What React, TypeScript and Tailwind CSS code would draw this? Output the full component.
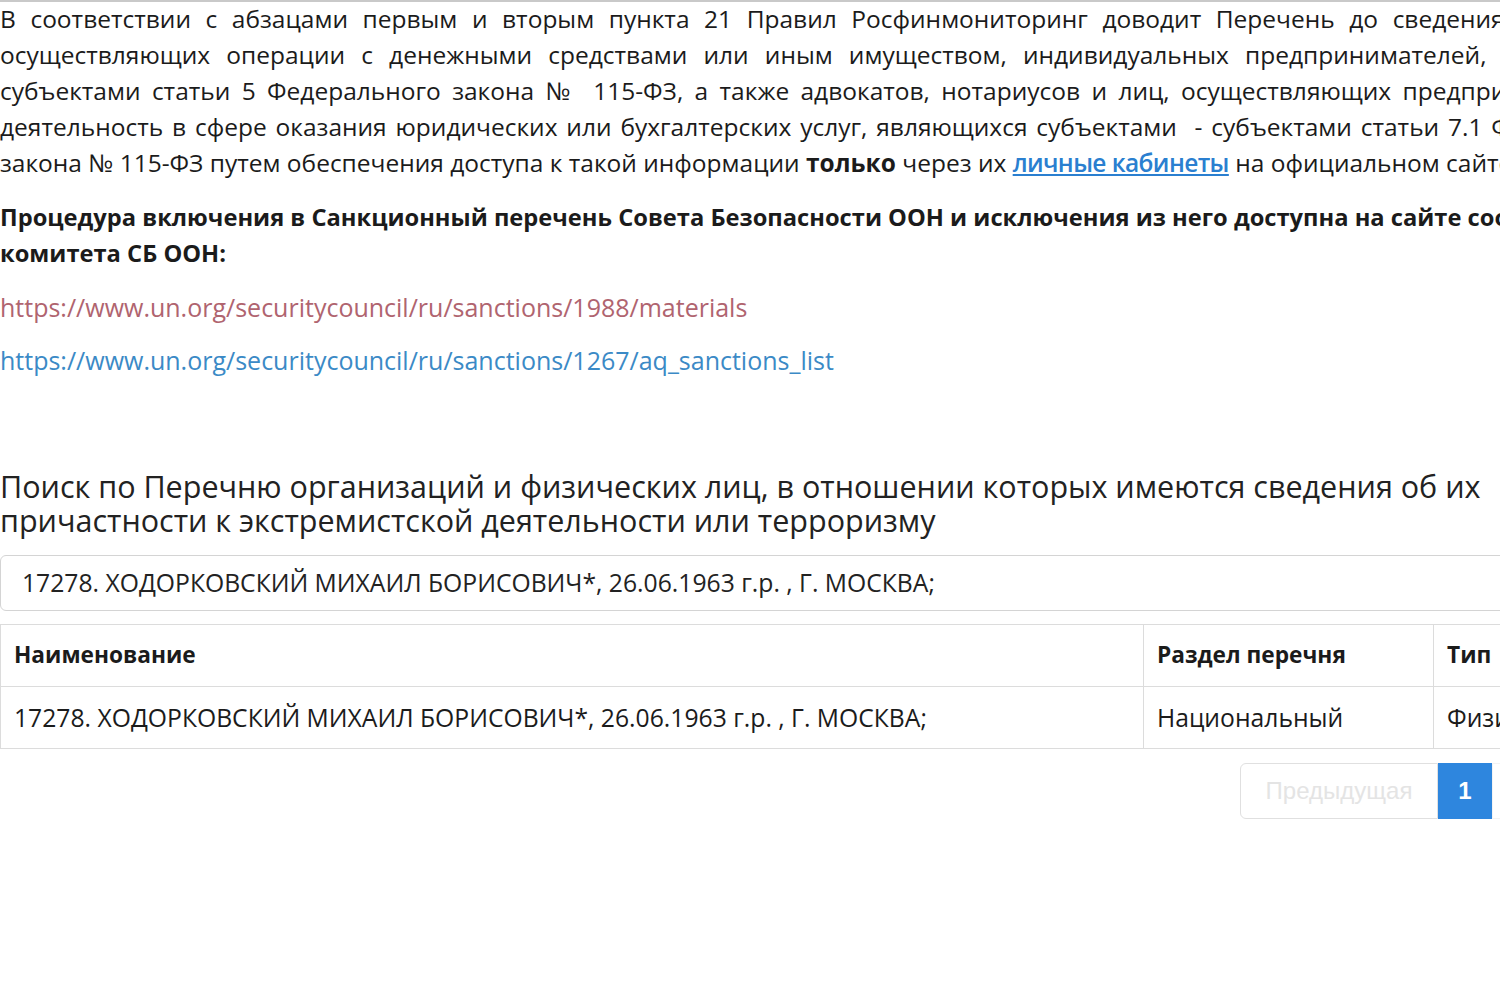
import React from 'react';

// each line of the intro keeps its own word spacing, as the justified original does
const lines = [
    'В соответствии с абзацами первым и вторым пункта 21 Правил Росфинмониторинг доводит Перечень до сведения организаций,',
    'осуществляющих операции с денежными средствами или иным имуществом, индивидуальных предпринимателей, являющихся',
    'субъектами статьи 5 Федерального закона №  115-ФЗ, а также адвокатов, нотариусов и лиц, осуществляющих предпринимательскую',
    'деятельность в сфере оказания юридических или бухгалтерских услуг, являющихся субъектами  - субъектами статьи 7.1 Федерального',
];

const fio = '17278. ХОДОРКОВСКИЙ МИХАИЛ БОРИСОВИЧ*, 26.06.1963 г.р. , Г. МОСКВА;';

export default function App() {
    return (
        <div className="w-[1500px] h-[1000px] overflow-hidden bg-white text-[#1b1b1b] font-['Open_Sans',sans-serif] border-t-2 border-[#c9c9c9]">
            <div className="w-[1620px]">
                {/* Intro paragraph */}
                <div className="text-[24.5px] leading-[36px] -mt-[1px]">
                    <div className="whitespace-pre [word-spacing:8.2px]">{lines[0]}</div>
                    <div className="whitespace-pre [word-spacing:9.8px]">{lines[1]}</div>
                    <div className="whitespace-pre [word-spacing:5px]">{lines[2]}</div>
                    <div className="whitespace-pre [word-spacing:2.5px]">{lines[3]}</div>
                    <div className="whitespace-nowrap">
                        закона № 115-ФЗ путем обеспечения доступа к такой информации{' '}
                        <b>только</b> через их{' '}
                        <a className="font-semibold tracking-[-0.6px] text-[#2a7fd0] underline">личные кабинеты</a>{' '}
                        на официальном сайте Росфинмониторинга.
                    </div>
                </div>

                <p className="mt-[18px] text-[23.7px] leading-[36px] font-bold whitespace-nowrap">
                    Процедура включения в Санкционный перечень Совета Безопасности ООН и исключения из него доступна на сайте соответствующего
                    <br />
                    комитета СБ ООН:
                </p>

                <p className="mt-[18px] text-[25px] leading-[36px] text-[#b0646f]">
                    https://www.un.org/securitycouncil/ru/sanctions/1988/materials
                </p>
                <p className="mt-[17px] text-[25px] leading-[36px] text-[#3b8ac6]">
                    https://www.un.org/securitycouncil/ru/sanctions/1267/aq_sanctions_list
                </p>

                <h2 className="mt-[91px] w-[1500px] text-[30.5px] leading-[34px] text-[#222]">
                    Поиск по Перечню организаций и физических лиц, в отношении которых имеются сведения об их причастности к экстремистской деятельности или терроризму
                </h2>

                <div className="mt-[18px] h-[56px] flex items-center px-[21px] border border-[#d4d4d4] rounded-md text-[24.7px] text-[#222]">
                    {fio}
                </div>

                <table className="mt-[13px] w-[1733px] table-fixed border-collapse text-[24.7px] text-[#1b1b1b]">
                    <colgroup>
                        <col className="w-[1143px]" />
                        <col className="w-[290px]" />
                        <col className="w-[300px]" />
                    </colgroup>
                    <thead>
                        <tr className="h-[62px] text-[22.7px]">
                            <th className="border border-[#dcdcdc] px-[13px] text-left font-bold">Наименование</th>
                            <th className="border border-[#dcdcdc] px-[13px] text-left font-bold">Раздел перечня</th>
                            <th className="border border-[#dcdcdc] px-[13px] text-left font-bold">Тип</th>
                        </tr>
                    </thead>
                    <tbody>
                        <tr className="h-[62px]">
                            <td className="border border-[#dcdcdc] px-[13px] whitespace-nowrap">{fio}</td>
                            <td className="border border-[#dcdcdc] px-[13px] whitespace-nowrap">Национальный</td>
                            <td className="border border-[#dcdcdc] px-[13px] whitespace-nowrap">Физическое лицо</td>
                        </tr>
                    </tbody>
                </table>

                {/* Pagination */}
                <div className="mt-[14px] flex justify-end">
                    <div className="flex h-[56px] text-[24px] font-['Liberation_Sans',sans-serif]">
                        <span className="w-[198px] flex items-center justify-center border border-[#e0e0e0] rounded-l-md text-[#e4e4e4]">
                            Предыдущая
                        </span>
                        <span className="w-[54px] flex items-center justify-center bg-[#2e86de] text-white font-bold">
                            1
                        </span>
                        <span className="w-[128px] flex items-center pl-[18px] overflow-hidden whitespace-nowrap border border-[#f3f3f3] rounded-r-md text-[#f2f2f2]">
                            Следующая
                        </span>
                    </div>
                </div>
            </div>
        </div>
    );
}
